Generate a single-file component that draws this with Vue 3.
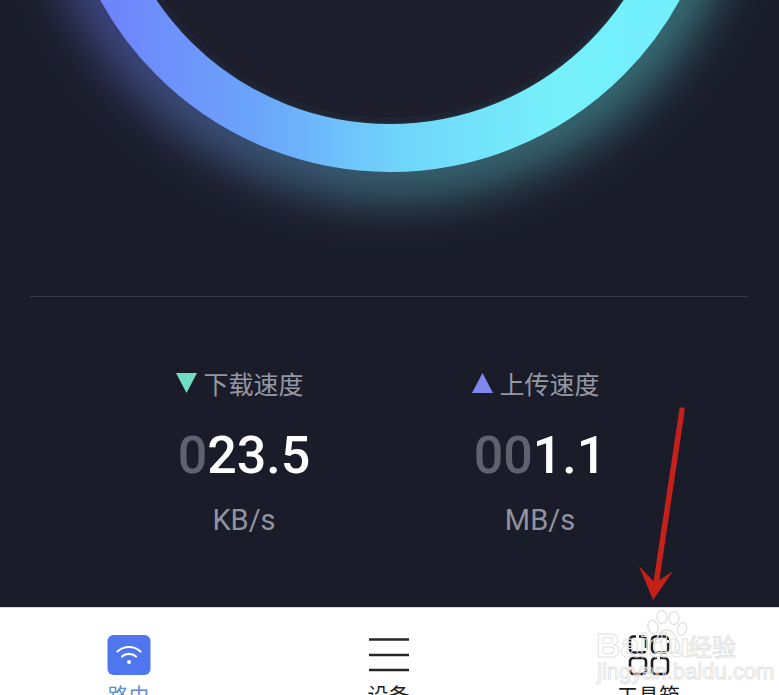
<script setup>
const stats = [
  { label: '下载速度', dim: '0', value: '23.5', unit: 'KB/s', up: false },
  { label: '上传速度', dim: '00', value: '1.1', unit: 'MB/s', up: true }
]
</script>

<template>
  <div class="page">
    <section class="hero">
      <svg class="ring" width="779" height="296" viewBox="0 0 779 296">
        <defs>
          <linearGradient id="ringGrad" gradientUnits="userSpaceOnUse" x1="100" y1="0" x2="640" y2="0">
            <stop offset="0" stop-color="#6f82fb" />
            <stop offset="0.3" stop-color="#6ba6fa" />
            <stop offset="0.55" stop-color="#70d4fa" />
            <stop offset="0.85" stop-color="#76f1fb" />
            <stop offset="1" stop-color="#72effb" />
          </linearGradient>
          <linearGradient id="glowGrad" gradientUnits="userSpaceOnUse" x1="100" y1="0" x2="680" y2="0">
            <stop offset="0" stop-color="#6e7ffb" />
            <stop offset="0.5" stop-color="#63c8d8" />
            <stop offset="1" stop-color="#62e8e8" />
          </linearGradient>
          <filter id="blurOuter" x="-30%" y="-30%" width="160%" height="180%">
            <feGaussianBlur stdDeviation="27" />
          </filter>
          <filter id="blurInner" x="-20%" y="-20%" width="140%" height="140%">
            <feGaussianBlur stdDeviation="6" />
          </filter>
        </defs>
        <circle cx="390" cy="-158" r="328" fill="none" stroke="url(#glowGrad)" stroke-width="44" opacity="0.6" filter="url(#blurOuter)" />
        <circle cx="390" cy="-158" r="278" fill="#1b1c2a" filter="url(#blurInner)" />
        <circle cx="390" cy="-158" r="306" fill="none" stroke="url(#ringGrad)" stroke-width="48" />
      </svg>
    </section>

    <div class="divider"></div>

    <section class="stats">
      <div v-for="s in stats" :key="s.label" class="stat">
        <div class="label">
          <svg class="tri" width="21" height="20" viewBox="0 0 21 20">
            <polygon v-if="s.up" points="10.5,0 21,20 0,20" fill="#7f86ee" />
            <polygon v-else points="0,0 21,0 10.5,20" fill="#6fdcc4" />
          </svg>
          <span>{{ s.label }}</span>
        </div>
        <div class="value"><span class="dim">{{ s.dim }}</span>{{ s.value }}</div>
        <div class="unit">{{ s.unit }}</div>
      </div>
    </section>

    <nav class="tabbar">
      <div class="tab active">
        <svg class="tab-icon" width="44" height="41" viewBox="0 0 44 41">
          <rect x="0.5" y="0" width="43" height="40" rx="6" fill="#4f76ee" />
          <g fill="none" stroke="#fff" stroke-width="2.2" stroke-linecap="round">
            <path d="M10.5 16.5 C17 10.5 27 10.5 33.5 16.5" />
            <path d="M15 21.5 C19 18 25 18 29 21.5" />
          </g>
          <circle cx="22" cy="27" r="2" fill="#fff" />
        </svg>
        <span>路由</span>
      </div>
      <div class="tab">
        <svg class="tab-icon" width="44" height="41" viewBox="0 0 44 41">
          <g stroke="#26262a" stroke-width="2.6">
            <line x1="2" y1="4.5" x2="42" y2="4.5" />
            <line x1="2" y1="20" x2="42" y2="20" />
            <line x1="2" y1="35" x2="42" y2="35" />
          </g>
        </svg>
        <span>设备</span>
      </div>
      <div class="tab">
        <svg class="tab-icon" width="44" height="41" viewBox="0 0 44 41">
          <g fill="none" stroke="#1f1f23" stroke-width="2.6">
            <rect x="3" y="1.5" width="16" height="16" rx="3.5" />
            <rect x="25" y="1.5" width="16" height="16" rx="3.5" />
            <rect x="3" y="23" width="16" height="16" rx="3.5" />
            <rect x="25" y="23" width="16" height="16" rx="3.5" />
          </g>
          <g fill="#fff">
            <rect x="9" y="0" width="3" height="3" />
            <rect x="17" y="13" width="3" height="3" />
            <rect x="36" y="5" width="6" height="3" />
            <rect x="1" y="32" width="3" height="3" />
            <rect x="30" y="21.5" width="3" height="3" />
          </g>
        </svg>
        <span>工具箱</span>
      </div>
    </nav>

    <div class="watermark">
      <svg class="paw" width="44" height="46" viewBox="0 0 44 46">
        <g fill="none" stroke="#e2e2e2" stroke-width="1.4">
          <ellipse cx="9" cy="17" rx="5" ry="7" transform="rotate(-18 9 17)" />
          <ellipse cx="18" cy="7" rx="5" ry="6.5" />
          <ellipse cx="30" cy="8" rx="5" ry="6.5" />
          <ellipse cx="38" cy="19" rx="4.5" ry="6.5" transform="rotate(18 38 19)" />
          <path d="M23 20 C15 20 12 30 10 35 C8 42 16 44 23 42 C30 44 38 42 35 34 C33 29 30 20 23 20 Z" />
        </g>
      </svg>
      <span class="wm-baidu">Bai</span>
      <span class="wm-du">du</span>
      <span class="wm-cn">经验</span>
      <span class="wm-url">jingyan.baidu.com</span>
    </div>

    <svg class="arrow" width="60" height="200" viewBox="0 0 60 200">
      <line x1="46" y1="4" x2="20" y2="178" stroke="#c5211b" stroke-width="5.5" stroke-linecap="round" />
      <polygon points="3,160 19,177 37,165 17,194" fill="#c5211b" />
    </svg>
  </div>
</template>

<style>
html, body { margin: 0; background: #1b1c2a; }
</style>

<style scoped>
.page {
  position: relative;
  width: 779px;
  height: 695px;
  overflow: hidden;
  background: #1b1c2a;
  font-family: Roboto, "Noto Sans CJK SC", sans-serif;
}
.hero { height: 296px; }
.ring { display: block; }
.divider {
  height: 1px;
  margin: 0 31px 0 30px;
  background: #373a44;
}
.stats {
  display: grid;
  grid-template-columns: 296px 296px;
  padding: 68px 0 0 96px;
  height: 310px;
  box-sizing: border-box;
}
.stat {
  display: flex;
  flex-direction: column;
  align-items: center;
}
.label {
  display: flex;
  align-items: center;
  gap: 6px;
  height: 36px;
  margin-left: -8px;
  font-size: 25px;
  color: #9598a2;
  font-family: "Noto Sans CJK SC", sans-serif;
  font-weight: 400;
}
.tri { flex: none; }
.value {
  margin-top: 24px;
  height: 62px;
  line-height: 62px;
  font-size: 52px;
  color: #fff;
  font-weight: 500;
}
.dim { color: #5f626d; }
.unit {
  margin-top: 15px;
  font-size: 29px;
  line-height: 36px;
  color: #90939d;
}
.tabbar {
  display: grid;
  grid-template-columns: repeat(3, 260px);
  justify-content: center;
  height: 88px;
  padding-right: 2px;
  background: #fff;
  border-top: 1px solid #d8d9e2;
  box-sizing: border-box;
  overflow: hidden;
  font-family: "Noto Sans CJK SC", sans-serif;
}
.tab {
  display: flex;
  flex-direction: column;
  align-items: center;
  padding-top: 27px;
  font-size: 21px;
  line-height: 30px;
  color: #1d1d20;
}
.tab.active { color: #5b8bd3; }
.tab-icon { display: block; flex: none; margin-bottom: 3px; }
.watermark {
  position: absolute;
  left: 594px;
  top: 608px;
  width: 150px;
  height: 80px;
  font-family: "Liberation Sans", sans-serif;
  color: transparent;
  -webkit-text-stroke: 1px #e3e3e3;
}
.paw { position: absolute; left: 50px; top: 2px; }
.wm-baidu, .wm-du, .wm-cn, .wm-url { position: absolute; white-space: nowrap; }
.wm-baidu { left: 2px; top: 18px; font-size: 34px; font-weight: 700; }
.wm-du { left: 54px; top: 18px; font-size: 34px; font-weight: 700; }
.wm-cn { left: 94px; top: 20px; font-size: 24px; font-family: "Noto Sans CJK SC", sans-serif; }
.wm-url { left: 3px; top: 51px; font-size: 22px; letter-spacing: 0; }
.arrow {
  position: absolute;
  left: 636px;
  top: 406px;
}
</style>
